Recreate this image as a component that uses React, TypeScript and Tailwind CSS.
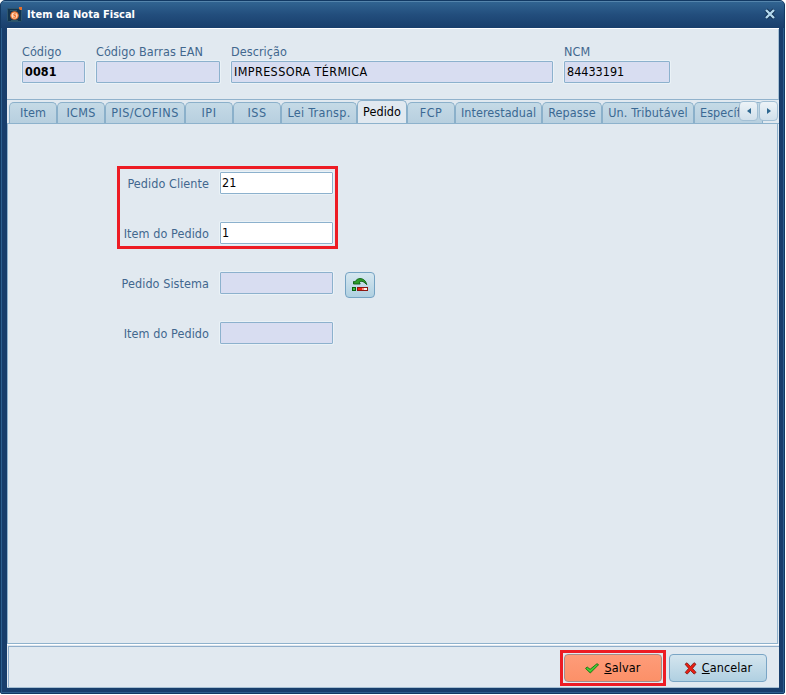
import React from "react";
import clsx from "clsx";

interface FieldProps {
  label: string;
  value?: string;
  className: string;
  valueClass?: string;
}

const tabs = [
  { label: "Item", width: "w-[48px]" },
  { label: "ICMS", width: "w-[48px]", spacing: "tracking-[0.3px]" },
  { label: "PIS/COFINS", width: "w-[80px]", spacing: "tracking-[0.45px]" },
  { label: "IPI", width: "w-[48px]", spacing: "tracking-[0.5px]" },
  { label: "ISS", width: "w-[48px]", spacing: "tracking-[0.5px]" },
  { label: "Lei Transp.", width: "w-[76px]", spacing: "tracking-[0.3px]" },
  { label: "Pedido", width: "w-[50px]", active: true },
  { label: "FCP", width: "w-[48px]", spacing: "tracking-[0.4px]" },
  { label: "Interestadual", width: "w-[87px]" },
  { label: "Repasse", width: "w-[60px]", spacing: "tracking-[0.12px]" },
  { label: "Un. Tributável", width: "w-[92px]", spacing: "tracking-[0.15px]" },
  { label: "Específico", width: "w-[69px]" },
];

const orderRows = [
  { label: "Pedido Cliente", value: "21", editable: true },
  { label: "Item do Pedido", value: "1", editable: true },
  { label: "Pedido Sistema", value: "", lookup: true },
  { label: "Item do Pedido", value: "" },
];

const inputBase =
  "flex h-[22px] items-center rounded-[1px] border border-[#8cb1cd] leading-none text-black shadow-[0_0_0_1px_#eaf2f7]";

const HeaderField = ({ label, value, className, valueClass }: FieldProps) => (
  <div className={className}>
    <div className="h-[17px] whitespace-nowrap leading-[15px] tracking-[0.07px] text-[#42678e]">{label}</div>
    <div className={clsx(inputBase, "bg-[#d8ddf1] px-[2px]", valueClass)}>{value}</div>
  </div>
);

const AppIcon = () => (
  <svg width="16" height="16" viewBox="0 0 16 16">
    <rect x="0.5" y="1.5" width="14" height="13" rx="1" fill="#12344f" stroke="#2d566e" />
    <path d="M3 3h7v1H3zM4 13h7v1H4z" fill="#2f5568" />
    <circle cx="7.5" cy="8.5" r="4.3" fill="#e8722e" />
    <circle cx="7.5" cy="8.5" r="3.1" fill="#ffd9bd" />
    <path d="M9.3 6.9H6.9v1.6h1.7v1.7H6.2" fill="none" stroke="#ee6d24" strokeWidth="1" />
    <path d="M12 0h3v3h-2l-1-1z" fill="#e5702d" />
  </svg>
);

const LookupIcon = () => (
  <svg width="16" height="14" viewBox="0 0 16 14">
    <path
      d="M1.5 3.5 3 3.8C4.5 1.5 6 .6 8 .6c3.5 0 5.8 2.3 6.8 6L12 4.2C10.8 3.2 9 2.9 7.3 4.2L8.2 6H1.5z"
      fill="#2f9f2b"
      stroke="#0b5c12"
      strokeWidth="0.9"
    />
    <g shapeRendering="crispEdges">
      <path d="M0 9h4v4H0z" fill="#08630d" />
      <path d="M5 9h11v4H5z" fill="#8c1710" />
      <path d="M1 10h2v2H1z" fill="#48ba45" />
      <path d="M6 10h4v2H6z" fill="#ef2716" />
      <path d="M10 10h2v2h-2z" fill="#ff8d80" />
      <path d="M12 10h3v2h-3z" fill="#fff1ed" />
    </g>
  </svg>
);

const CheckIcon = () => (
  <svg width="14" height="11" viewBox="0 0 14 11">
    <path d="M.5 5.4 2.2 4l2.9 2.3L12 .7l1.6 1L5.3 10z" fill="#35c92b" stroke="#26751b" />
    <path d="m2 5.4 3 2.5 6.8-5.7" fill="none" stroke="#50d23c" />
  </svg>
);

const CancelIcon = () => (
  <svg width="13" height="13" viewBox="0 0 13 13">
    <path
      d="m1 2.2 2-1.4 3.5 3.7L10 .7l2 1.5-3.5 4.2 3.6 4-2 1.7-3.6-3.6-3.3 3.6-2-1.7 3.4-4z"
      fill="#e81e13"
      stroke="#7e160f"
      strokeWidth="0.8"
    />
  </svg>
);

const Arrow = ({ left }: { left?: boolean }) => (
  <button className="flex h-5 w-[19px] items-center justify-center rounded-[4px] border border-[#a2bfd4] bg-gradient-to-b from-[#edf3f7] to-[#d1e0eb]">
    <svg width="4" height="6" viewBox="0 0 4 6">
      <path d={left ? "M4 0v6L0 3z" : "M0 0v6l4-3z"} fill="#2e6790" />
    </svg>
  </button>
);

const App = () => {
  return (
    <div className="flex h-[694px] w-[785px] flex-col overflow-hidden rounded-[5px] rounded-b-[2px] border border-[#123963] bg-[#183e6c] font-['DejaVu_Sans_Condensed','DejaVu_Sans',sans-serif] text-[12.5px] [font-stretch:condensed]">
      {/* Title bar */}
      <div className="flex h-[27px] shrink-0 items-center border-t border-[#5585ac] bg-gradient-to-b from-[#316491] via-[#224d7c] to-[#193f6c] pl-[6px] pr-[8px]">
        <AppIcon />
        <h1 className="ml-[4px] flex-1 whitespace-nowrap pb-[2px] text-[11px] font-bold leading-none text-white">Item da Nota Fiscal</h1>
        <button aria-label="Fechar" className="pb-[2px]">
          <svg width="12" height="12" viewBox="0 0 12 12">
            <path d="m2 2 8 8m0-8-8 8" stroke="#102f51" strokeWidth="4" />
            <path d="m2 2 8 8m0-8-8 8" stroke="#b4d9ed" strokeWidth="2.4" />
          </svg>
        </button>
      </div>

      <div className="flex flex-1 flex-col border-x border-b border-[#2d5f8e] pb-[4px] pl-[5px] pr-[4px]">
        <div className="flex flex-1 flex-col border-t border-white bg-[#e1e9f0]">
          {/* Product data */}
          <div className="flex h-[71px] gap-[11px] border-b border-[#91b2cc] border-r border-r-[#a7c1d5] pl-[15px] pt-[15px]">
            <HeaderField label="Código" value="0081" className="w-[63px]" valueClass="font-bold tracking-[0.1px]" />
            <HeaderField label="Código Barras EAN" className="w-[124px]" />
            <HeaderField
              label="Descrição"
              value="IMPRESSORA TÉRMICA"
              className="w-[322px]"
              valueClass="tracking-[0.38px]"
            />
            <HeaderField label="NCM" value="84433191" className="w-[106px]" />
          </div>

          {/* Tabs */}
          <div className="relative flex h-[24px] items-end overflow-hidden border-b border-[#8db2cc] pl-[2px]">
            {tabs.map((tab) => (
              <div
                key={tab.label}
                className={clsx(
                  "flex shrink-0 items-center justify-center whitespace-nowrap rounded-t-[5px] border border-b-0 border-[#8bb0ca]",
                  tab.width,
                  tab.spacing ?? "tracking-[0.05px]",
                  tab.active
                    ? "-mb-px h-[24px] bg-[#e1e9f0] pb-px text-black"
                    : "h-[21px] bg-gradient-to-b from-[#c5dae6] to-[#b7cfdf] text-[#3b6993]"
                )}
              >
                {tab.label}
              </div>
            ))}
            <div className="absolute right-px top-[1px] flex gap-px">
              <Arrow left />
              <Arrow />
            </div>
          </div>

          {/* Order form */}
          <div className="mr-px flex-1 border-x border-b border-[#8fb2cd] pl-[90px] pt-[48px]">
            <div className="relative flex flex-col gap-[28px]">
              {orderRows.map((row, idx) => (
                <div key={idx} className="flex h-[22px] items-center">
                  <span className="w-[111px] whitespace-nowrap pt-[2px] text-right tracking-[0.07px] text-[#42678e]">
                    {row.label}
                  </span>
                  <div
                    className={clsx(
                      inputBase,
                      "ml-[11px] w-[113px] px-px",
                      row.editable ? "bg-white" : "bg-[#d8ddf1]"
                    )}
                  >
                    {row.value}
                  </div>
                  {row.lookup && (
                    <button className="ml-[12px] mt-[4px] flex h-[26px] w-[30px] items-center justify-center rounded-[4px] border border-[#75a3c3] bg-gradient-to-b from-[#d6e7f0] to-[#afd0e1]">
                      <LookupIcon />
                    </button>
                  )}
                </div>
              ))}
              <div className="absolute left-[19px] top-[-6px] h-[83px] w-[221px] border-[3px] border-[#ed1c24]" />
            </div>
          </div>

          {/* Actions */}
          <div className="h-[44px] border-y border-white border-b-[#a5bfd3] pl-[1px] pt-[1px]">
            <div className="flex h-full items-start justify-end gap-[3px] border-l border-t border-[#90aecb] pr-[12px] pt-[3px]">
              <div className="h-[36px] w-[106px] border-[3px] border-[#ed1c24] p-[1px]">
                <button className="flex h-[28px] w-[98px] items-center justify-center gap-[5px] rounded-[4px] border border-[#a58d88] bg-gradient-to-b from-[#fe9c79] to-[#fc9068] tracking-[0.15px]">
                  <CheckIcon />
                  <span><u>S</u>alvar</span>
                </button>
              </div>
              <button className="mt-[4px] flex h-[28px] w-[98px] items-center justify-center gap-[5px] rounded-[4px] border border-[#7aa5c5] bg-gradient-to-b from-[#d4e5ee] to-[#b0d0e1] tracking-[0.1px]">
                <CancelIcon />
                <span><u>C</u>ancelar</span>
              </button>
            </div>
          </div>
        </div>
      </div>
    </div>
  );
};

export default App;
